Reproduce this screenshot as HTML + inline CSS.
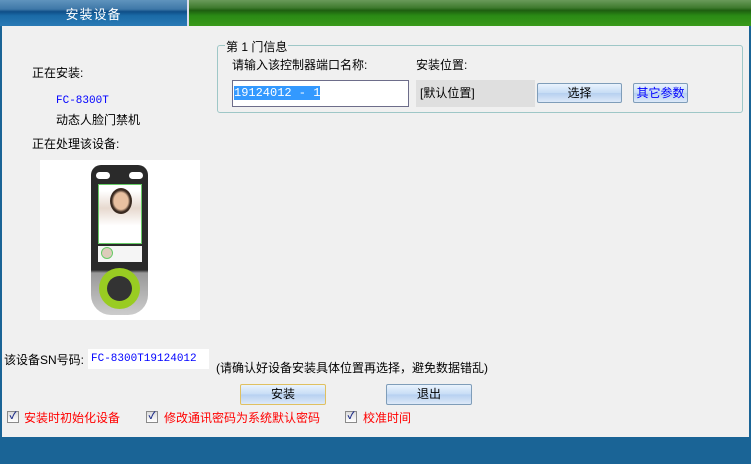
<!DOCTYPE html>
<html><head><meta charset="utf-8"><style>
*{margin:0;padding:0;box-sizing:border-box}
body{width:751px;height:464px;overflow:hidden;background:#1a6496;font-family:"Liberation Sans","Noto Sans CJK SC",sans-serif;font-size:12px;color:#000;position:relative}
.a{position:absolute}
#main{left:2px;top:26px;width:747px;height:411px;background:#f0f0f0}
.btn{position:absolute;border:1px solid #7f9db9;border-radius:2px;background:linear-gradient(#eaf3fd,#c6dcf5 50%,#b6d0f0 51%,#dde9f8);text-align:center;line-height:18px;font-size:12px}
.cb{position:absolute;width:12px;height:12px;border:1px solid #8a8a8a;background:linear-gradient(#ddd,#fff);color:#22318a;font-size:10px;line-height:10px;text-align:center;font-weight:bold}
.red{color:#f00;position:absolute;font-size:12px}
</style></head><body>
<div class="a" style="left:0;top:0;width:187px;height:26px;background:linear-gradient(#5f93bd 0,#3f78a8 35%,#0f4f88 45%,#1a6aa6 60%,#2a7ab5 100%)"></div>
<div class="a" style="left:0;top:4px;width:187px;text-align:center;color:#fff;font-size:13px;letter-spacing:1px">安装设备</div>
<div class="a" style="left:187px;top:0;width:2px;height:26px;background:#dde"></div>
<div class="a" style="left:189px;top:0;width:562px;height:26px;background:linear-gradient(#6a9a5a 0,#3f7a2e 30%,#1e5e10 40%,#2a8a15 60%,#3a9a1a 100%)"></div>
<div class="a" id="main"></div>
<div class="a" style="left:32px;top:64px">正在安装:</div>
<div class="a" style="left:56px;top:95px;color:#00f;font-family:'Liberation Mono',monospace;font-size:11px">FC-8300T</div>
<div class="a" style="left:56px;top:111px">动态人脸门禁机</div>
<div class="a" style="left:32px;top:135px">正在处理该设备:</div>
<div class="a" style="left:40px;top:160px;width:160px;height:160px;background:#fff">
 <div class="a" style="left:51px;top:5px;width:57px;height:150px;border-radius:10px 10px 20px 20px;background:linear-gradient(#2a2a2a 70%,#999 72%,#ccc 100%)"></div>
 <div class="a" style="left:56px;top:12px;width:14px;height:7px;border-radius:4px;background:#fff"></div>
 <div class="a" style="left:89px;top:12px;width:14px;height:7px;border-radius:4px;background:#fff"></div>
 <div class="a" style="left:58px;top:24px;width:44px;height:60px;border:1px solid #6c6;background:linear-gradient(#fff 10%,#e7d9cf 40%,#fff 70%)"></div>
 <div class="a" style="left:70px;top:28px;width:22px;height:26px;border-radius:50%;background:radial-gradient(#e8c0a0 45%,#3a2a20 60%)"></div>
 <div class="a" style="left:58px;top:86px;width:44px;height:16px;background:#f5f5f5"></div>
 <div class="a" style="left:61px;top:87px;width:12px;height:12px;border-radius:50%;border:1px solid #6c6;background:#dcb"></div>
 <div class="a" style="left:59px;top:108px;width:41px;height:41px;border-radius:50%;background:#9c2"></div>
 <div class="a" style="left:67px;top:116px;width:25px;height:25px;border-radius:50%;background:#333"></div>
</div>
<div class="a" style="left:217px;top:45px;width:526px;height:68px;border:1px solid #9ec7c7;border-radius:3px"></div>
<div class="a" style="left:225px;top:38px;background:#f0f0f0;padding:0 1px">第 1 门信息</div>
<div class="a" style="left:232px;top:56px">请输入该控制器端口名称:</div>
<div class="a" style="left:416px;top:56px">安装位置:</div>
<div class="a" style="left:232px;top:80px;width:177px;height:27px;border:1px solid #6d6d8a;background:#fff"></div>
<div class="a" style="left:234px;top:86px;background:#3399ff;color:#fff;font-family:'Liberation Mono',monospace;font-size:12px;line-height:14px">19124012 - 1</div>
<div class="a" style="left:416px;top:80px;width:119px;height:27px;background:#dfdfdf;line-height:27px;padding-left:4px">[默认位置]</div>
<div class="btn" style="left:537px;top:83px;width:85px;height:20px">选择</div>
<div class="btn" style="left:633px;top:83px;width:55px;height:20px;color:#00f">其它参数</div>
<div class="a" style="left:4px;top:351px">该设备SN号码:</div>
<div class="a" style="left:88px;top:349px;width:121px;height:20px;background:#fff"></div>
<div class="a" style="left:91px;top:352px;color:#00f;font-family:'Liberation Mono',monospace;font-size:11px;line-height:14px">FC-8300T19124012</div>
<div class="a" style="left:216px;top:359px">(请确认好设备安装具体位置再选择，避免数据错乱)</div>
<div class="btn" style="left:240px;top:384px;width:86px;height:21px;border-color:#e0c060">安装</div>
<div class="btn" style="left:386px;top:384px;width:86px;height:21px">退出</div>
<div class="cb" style="left:7px;top:411px">✓</div><div class="red" style="left:24px;top:409px">安装时初始化设备</div>
<div class="cb" style="left:146px;top:411px">✓</div><div class="red" style="left:164px;top:409px">修改通讯密码为系统默认密码</div>
<div class="cb" style="left:345px;top:411px">✓</div><div class="red" style="left:363px;top:409px">校准时间</div>
</body></html>
